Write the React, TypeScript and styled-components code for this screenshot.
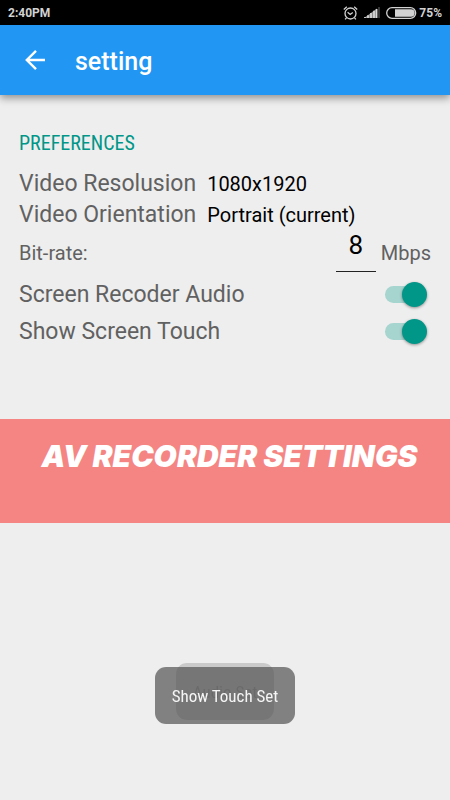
import React, { useState } from "react";
import styled, { createGlobalStyle } from "styled-components";

const GlobalStyle = createGlobalStyle`
  *, *::before, *::after { box-sizing: border-box; }
  body {
    margin: 0;
    background: #eeeeee;
    font-family: Roboto, "Liberation Sans", sans-serif;
  }
`;

const Screen = styled.div`
  min-height: 100vh;
  background: #eeeeee;
`;

const StatusBar = styled.div`
  display: flex;
  align-items: center;
  justify-content: space-between;
  height: 25px;
  padding: 0 8px;
  background: #000000;
  color: #d2d2d2;
  font-size: 12px;
  font-weight: 700;
`;

const StatusIcons = styled.div`
  display: flex;
  align-items: center;
  gap: 6px;
`;

const BatteryLevel = styled.div`
  display: flex;
  align-items: center;
  gap: 2px;
`;

const AppBar = styled.header`
  display: flex;
  align-items: center;
  gap: 29px;
  height: 70px;
  padding: 0 24px;
  background: #2196f3;
  color: #ffffff;
  box-shadow: 0 3px 8px rgba(0, 0, 0, 0.4);
`;

const BackButton = styled.button`
  display: flex;
  padding: 0;
  border: 0;
  background: none;
  color: inherit;
  cursor: pointer;
`;

const Title = styled.h1`
  margin: 0;
  padding-top: 4px;
  font-size: 25px;
  font-weight: 500;
  line-height: 32px;
`;

const Preferences = styled.main`
  padding: 36px 19px 69px;
`;

const SectionTitle = styled.h2`
  margin: 0 0 13px;
  color: #009688;
  font-family: "Roboto Condensed", Roboto, sans-serif;
  font-size: 20px;
  font-weight: 400;
  line-height: 24px;
`;

const Row = styled.div<{ $height: number }>`
  display: flex;
  align-items: center;
  height: ${(p) => p.$height}px;
`;

const Label = styled.label<{ $small?: boolean }>`
  color: #616161;
  font-size: ${(p) => (p.$small ? 20 : 23)}px;
  line-height: 28px;
`;

const Choice = styled.select`
  appearance: none;
  margin-left: 11px;
  padding: 0;
  border: 0;
  background: none;
  color: #000000;
  font-family: inherit;
  font-size: 20px;
  line-height: 28px;
`;

const BitRate = styled.div`
  display: flex;
  align-items: center;
  gap: 5px;
  margin-left: auto;
`;

const RateInput = styled.input`
  width: 40px;
  height: 42px;
  margin-bottom: 5px;
  padding: 0 0 10px;
  border: 0;
  border-bottom: 1px solid #222222;
  background: none;
  color: #000000;
  font-family: inherit;
  font-size: 26px;
  text-align: center;
`;

const Switch = styled.input`
  appearance: none;
  display: flex;
  align-items: center;
  width: 42px;
  height: 25px;
  margin: 0 4px 0 auto;
  cursor: pointer;

  &::before {
    content: "";
    flex: none;
    width: 38px;
    height: 17px;
    border-radius: 9px;
    background: ${(p) => (p.checked ? "#a6d4cf" : "#bdbdbd")};
  }

  &::after {
    content: "";
    flex: none;
    width: 25px;
    height: 25px;
    margin-left: ${(p) => (p.checked ? -21 : -38)}px;
    border-radius: 50%;
    background: ${(p) => (p.checked ? "#009688" : "#fafafa")};
    box-shadow: 0 1px 3px rgba(0, 0, 0, 0.4);
  }
`;

const Banner = styled.section`
  display: flex;
  justify-content: center;
  height: 104px;
  padding: 19px 0 0 9px;
  background: #f58583;
`;

const BannerText = styled.h2`
  margin: 0;
  color: #ffffff;
  font-family: Inter, sans-serif;
  font-size: 30px;
  font-style: italic;
  font-weight: 900;
  line-height: 36px;
  white-space: nowrap;
`;

const Toasts = styled.div`
  position: fixed;
  right: 0;
  bottom: 76px;
  left: 0;
  display: grid;
  justify-items: center;
  pointer-events: none;
`;

const Toast = styled.div<{ $fading?: boolean }>`
  grid-area: 1 / 1;
  display: flex;
  align-items: center;
  height: 57px;
  padding: 0 17px;
  margin-bottom: ${(p) => (p.$fading ? 4 : 0)}px;
  margin-top: ${(p) => (p.$fading ? 0 : 4)}px;
  border-radius: 11px;
  background: ${(p) => (p.$fading ? "rgba(60, 60, 60, 0.2)" : "rgba(83, 83, 83, 0.7)")};
  color: ${(p) => (p.$fading ? "rgba(70, 70, 70, 0.3)" : "#f5f5f5")};
  font-family: "Roboto Condensed", Roboto, sans-serif;
  font-size: 17px;
  white-space: nowrap;
`;

function AlarmIcon() {
  return (
    <svg width="15" height="14" viewBox="0 0 15 14" fill="none" stroke="#d2d2d2" aria-hidden="true">
      <circle cx="7.5" cy="7.5" r="5.5" strokeWidth="1.3" />
      <path d="M4.6 6.2l2.6 2.2 2.6-2M.8 3.4L3.8.8M14.2 3.4L11.2.8M3.4 12l-1.3 1.4M11.6 12l1.3 1.4" strokeWidth="1.3" />
    </svg>
  );
}

function SignalIcon() {
  return (
    <svg width="16" height="11" viewBox="0 0 16 11" aria-hidden="true">
      <path d="M0 11L13 1.6V11z" fill="#8a8a8a" />
      <path d="M1 11V10M4 11V8.2M7 11V6M10 11V3.8M12.6 11V2" stroke="#d8d8d8" strokeWidth="1.7" />
      <path d="M15 11V0" stroke="#353535" strokeWidth="2" />
    </svg>
  );
}

function BatteryIcon() {
  return (
    <svg width="31" height="12" viewBox="0 0 31 12" aria-hidden="true">
      <rect x=".7" y=".7" width="29" height="10.6" rx="5.3" fill="none" stroke="#d2d2d2" strokeWidth="1.3" />
      <path d="M9 2.3h16a3.7 3.7 0 0 1 0 7.4H9z" fill="#d2d2d2" />
    </svg>
  );
}

function BackIcon() {
  return (
    <svg width="22" height="22" viewBox="0 0 22 22" fill="none" stroke="currentColor" strokeWidth="2.4" aria-hidden="true">
      <path d="M21 11H3M12 1.8L2.8 11l9.2 9.2" />
    </svg>
  );
}

export default function App() {
  const [rate, setRate] = useState("8");
  const [audio, setAudio] = useState(true);
  const [touch, setTouch] = useState(true);

  return (
    <Screen>
      <GlobalStyle />
      <StatusBar>
        <span>2:40PM</span>
        <StatusIcons>
          <AlarmIcon />
          <SignalIcon />
          <BatteryLevel>
            <BatteryIcon />
            <span>75%</span>
          </BatteryLevel>
        </StatusIcons>
      </StatusBar>
      <AppBar>
        <BackButton type="button" aria-label="Back">
          <BackIcon />
        </BackButton>
        <Title>setting</Title>
      </AppBar>
      <Preferences>
        <SectionTitle>PREFERENCES</SectionTitle>
        <Row $height={31}>
          <Label htmlFor="resolution">Video Resolusion</Label>
          <Choice id="resolution">
            <option>1080x1920</option>
          </Choice>
        </Row>
        <Row $height={31}>
          <Label htmlFor="orientation">Video Orientation</Label>
          <Choice id="orientation">
            <option>Portrait (current)</option>
          </Choice>
        </Row>
        <Row $height={46}>
          <Label htmlFor="rate" $small>Bit-rate:</Label>
          <BitRate>
            <RateInput id="rate" inputMode="numeric" value={rate} onChange={(e) => setRate(e.target.value)} />
            <Label htmlFor="rate" $small>Mbps</Label>
          </BitRate>
        </Row>
        <Row $height={37}>
          <Label htmlFor="audio">Screen Recoder Audio</Label>
          <Switch id="audio" type="checkbox" role="switch" checked={audio} onChange={(e) => setAudio(e.target.checked)} />
        </Row>
        <Row $height={37}>
          <Label htmlFor="touch">Show Screen Touch</Label>
          <Switch id="touch" type="checkbox" role="switch" checked={touch} onChange={(e) => setTouch(e.target.checked)} />
        </Row>
      </Preferences>
      <Banner>
        <BannerText>AV RECORDER SETTINGS</BannerText>
      </Banner>
      <Toasts role="status">
        <Toast $fading>Audio Set</Toast>
        <Toast>Show Touch Set</Toast>
      </Toasts>
    </Screen>
  );
}
